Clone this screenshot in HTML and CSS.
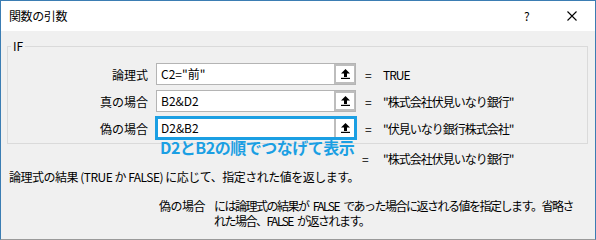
FILE: index.html
```html
<!DOCTYPE html>
<html><head><meta charset="utf-8"><title>関数の引数</title><link rel="stylesheet" href="styles.css"></head>
<body>
<div class="window">
  <div class="titlebar">
    <span class="title">関数の引数</span>
    <span class="help">?</span>
    <span class="close"><svg width="10" height="10" viewBox="0 0 10 10"><path d="M0.5 0.5L9.5 9.5M9.5 0.5L0.5 9.5" stroke="#000" stroke-width="1.1" fill="none"/></svg></span>
  </div>
  <div class="content">
    <fieldset class="args">
      <legend class="fname">IF</legend>
      <div class="rows">
        <div class="label">論理式</div>
        <div class="field"><span class="val">C2="前"</span><span class="btn"><svg width="9" height="10" viewBox="0 0 9 10"><path d="M4.5 0L9 4.5H6V8H3V4.5H0Z" fill="#000"/><rect x="0" y="8.8" width="9" height="1.2" fill="#000"/></svg></span></div>
        <div class="eq">=</div>
        <div class="res">TRUE</div>

        <div class="label">真の場合</div>
        <div class="field"><span class="val">B2&amp;D2</span><span class="btn"><svg width="9" height="10" viewBox="0 0 9 10"><path d="M4.5 0L9 4.5H6V8H3V4.5H0Z" fill="#000"/><rect x="0" y="8.8" width="9" height="1.2" fill="#000"/></svg></span></div>
        <div class="eq">=</div>
        <div class="res">"株式会社伏見いなり銀行"</div>

        <div class="label">偽の場合</div>
        <div class="field focus"><span class="val">D2&amp;B2</span><span class="btn"><svg width="9" height="10" viewBox="0 0 9 10"><path d="M4.5 0L9 4.5H6V8H3V4.5H0Z" fill="#000"/><rect x="0" y="8.8" width="9" height="1.2" fill="#000"/></svg></span></div>
        <div class="eq">=</div>
        <div class="res">"伏見いなり銀行株式会社"</div>
      </div>
    </fieldset>
    <div class="total">
      <div class="eq">=</div>
      <div class="res">"株式会社伏見いなり銀行"</div>
    </div>
    <p class="desc">論理式の結果 (TRUE か FALSE) に応じて、指定された値を返します。</p>
    <div class="argdesc">
      <div class="argname">偽の場合</div>
      <div class="argtext">には論理式の結果が FALSE であった場合に返される値を指定します。省略さ<br>れた場合、FALSE が返されます。</div>
    </div>
  </div>
  <div class="note">D2とB2の順でつなげて表示</div>
</div>
</body></html>
```

FILE: styles.css
```css
body {
  margin: 0;
  font-family: "Noto Sans CJK JP", "Noto Sans", sans-serif;
  font-size: 12px;
  color: #000;
}

.window {
  position: relative;
  box-sizing: border-box;
  width: 596px;
  height: 240px;
  border: 1px solid #3b7db3;
  border-bottom-color: #9a9a9a;
  background: #f0f0f0;
  overflow: hidden;
}

.titlebar {
  display: flex;
  align-items: center;
  height: 30px;
  background: #fff;
  padding-left: 8px;
}

.title {
  flex: 1;
  line-height: 16px;
  letter-spacing: -0.4px;
}

.help {
  width: 14px;
  margin-right: 29px;
  line-height: 16px;
}

.close {
  display: flex;
  width: 10px;
  margin-right: 18px;
}

.content {
  padding: 9px 0 0 6px;
}

.args {
  margin: 0;
  width: 579px;
  padding: 11px 0 4px 0;
  border: 1px solid #dadada;
}

.fname {
  margin-left: 3px;
  padding: 0 2px;
  line-height: 12px;
}

.rows {
  display: grid;
  grid-template-columns: 148px 200px 27px auto;
  grid-auto-rows: 22px;
  row-gap: 5px;
  align-items: center;
}

.label {
  text-align: right;
  padding-right: 8px;
}

.field {
  display: flex;
  box-sizing: border-box;
  height: 22px;
  border: 1px solid #b4b4b4;
  background: #fff;
}

.field.focus {
  border: 3px solid #1b9fe3;
  margin: 0 -1px;
  height: 24px;
}

.val {
  flex: 1;
  padding-left: 4px;
  line-height: 20px;
}

.focus .val {
  padding-left: 3px;
  line-height: 18px;
}

.btn {
  display: flex;
  align-items: center;
  justify-content: center;
  box-sizing: border-box;
  width: 21px;
  border: 2px solid #bdbdbd;
  border-right-width: 1px;
  background: #fff;
}

.focus .btn {
  border: 0;
  border-left: 2px solid #bdbdbd;
  width: 20px;
}

.eq {
  padding-left: 9px;
}

.res {
  letter-spacing: -1px;
}

.total {
  display: grid;
  grid-template-columns: 355px 21px auto;
  margin-top: 8px;
  line-height: 14px;
}

.total .eq {
  grid-column: 2;
  padding-left: 0;
}

.desc {
  margin: 3px 0 0 2px;
  line-height: 16px;
  letter-spacing: -0.5px;
}

.argdesc {
  display: flex;
  margin-top: 13px;
  line-height: 15px;
}

.argname {
  flex: none;
  width: 55px;
  padding-left: 152px;
  letter-spacing: -0.5px;
}

.argtext {
  flex: none;
  white-space: nowrap;
  letter-spacing: -1.5px;
  word-spacing: 3px;
}

.note {
  position: absolute;
  left: 159px;
  top: 137px;
  font-size: 16px;
  font-weight: bold;
  line-height: 18px;
  letter-spacing: -0.5px;
  color: #1b9fe3;
}
```
